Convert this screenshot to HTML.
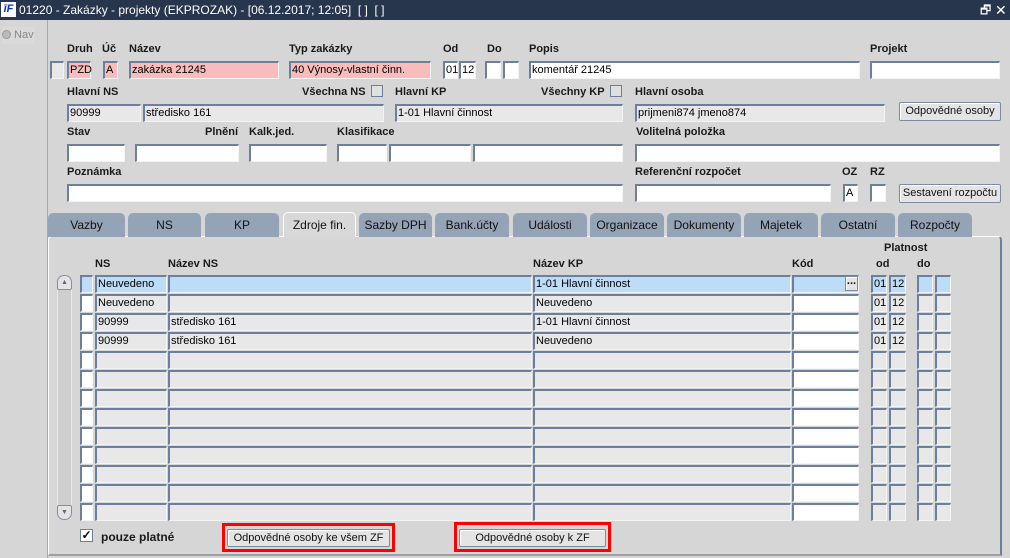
<!DOCTYPE html>
<html><head><meta charset="utf-8">
<style>
*{box-sizing:border-box;margin:0;padding:0}
body{width:1010px;height:558px;overflow:hidden;background:#d6d6d6;font-family:"Liberation Sans",Arial,sans-serif;font-size:11px;color:#000;position:relative}
.a{position:absolute}
#title{left:0;top:0;width:1010px;height:20px;background:#27354d;color:#fff;font-size:12px;line-height:20px}
.lb{position:absolute;font-weight:bold;font-size:11px;color:#1a1a1a;white-space:nowrap}
.f{position:absolute;height:18px;background:#fff;border-top:2px solid #6c7f9c;border-left:2px solid #6c7f9c;border-right:1px solid #f4f4f4;border-bottom:1px solid #f4f4f4;font-size:11px;line-height:14px;padding-left:1px;white-space:nowrap;overflow:visible}
.p{background:#f9bcbc}
.g{background:#e8e8e8}
.hl{background:#bddcf8}
.btn{position:absolute;background:#e4e4e4;border:1px solid #7d8aa0;border-radius:2px;box-shadow:inset 1px 1px 0 #fff;font-size:11px;text-align:center;line-height:16px;color:#111}
.cb{position:absolute;width:12px;height:12px;background:#e0e0e0;border:1px solid #6f7f96}
.tab{position:absolute;top:213px;height:24px;background:#95a3b7;border-radius:5px 5px 0 0;font-size:12px;text-align:center;line-height:24px;color:#111}
.red{position:absolute;border:3px solid #f00}
</style></head><body>
<div id="title" class="a"><span class="a" style="left:1px;top:2px;width:15px;height:15px;background:#fff;color:#1030c0;font-weight:bold;font-style:italic;font-size:11px;line-height:15px;text-align:center">īF</span><span class="a" style="left:19px">01220 - Zakázky - projekty (EKPROZAK) - [06.12.2017; 12:05]&nbsp; [ ]&nbsp; [ ]</span><span class="a" style="left:980px;font-size:12px">🗗</span><span class="a" style="left:995px;font-size:14px">✕</span></div>
<div class="a" style="left:0;top:20px;width:48px;height:538px;background:#d6d6d6;border-right:1px solid #a8a8a8"></div>
<div class="a" style="left:2px;top:27px;width:32px;height:17px;background:#dadada;color:#888;font-size:11px;line-height:17px"><span style="display:inline-block;width:9px;height:9px;border-radius:50%;background:#bbb;border:1px solid #999;vertical-align:-1px"></span> Nav</div>

<div class="lb" style="left:67px;top:43px">Druh</div><div class="lb" style="left:102px;top:43px">Úč</div><div class="lb" style="left:129px;top:43px">Název</div><div class="lb" style="left:289px;top:43px">Typ zakázky</div><div class="lb" style="left:443px;top:43px">Od</div><div class="lb" style="left:487px;top:43px">Do</div><div class="lb" style="left:529px;top:43px">Popis</div><div class="lb" style="left:870px;top:43px">Projekt</div>
<div class="f g" style="left:50px;top:61px;width:14px"></div>
<div class="f p" style="left:67px;top:61px;width:24px">PZD</div>
<div class="f p" style="left:103px;top:61px;width:15px">A</div>
<div class="f p" style="left:129px;top:61px;width:150px">zakázka 21245</div>
<div class="f p" style="left:289px;top:61px;width:142px">40 Výnosy-vlastní činn.</div>
<div class="f" style="left:443px;top:61px;width:15px">01</div>
<div class="f" style="left:459px;top:61px;width:17px">12</div>
<div class="f" style="left:485px;top:61px;width:16px"></div>
<div class="f" style="left:503px;top:61px;width:16px"></div>
<div class="f" style="left:529px;top:61px;width:331px">komentář 21245</div>
<div class="f" style="left:870px;top:61px;width:130px"></div>

<div class="lb" style="left:67px;top:86px">Hlavní NS</div><div class="lb" style="left:302px;top:86px">Všechna NS</div><div class="cb" style="left:371px;top:85px"></div><div class="lb" style="left:395px;top:86px">Hlavní KP</div><div class="lb" style="left:541px;top:86px">Všechny KP</div><div class="cb" style="left:610px;top:85px"></div><div class="lb" style="left:635px;top:86px">Hlavní osoba</div>
<div class="f g" style="left:67px;top:104px;width:74px">90999</div>
<div class="f g" style="left:143px;top:104px;width:241px">středisko 161</div>
<div class="f g" style="left:395px;top:104px;width:228px">1-01 Hlavní činnost</div>
<div class="f g" style="left:635px;top:104px;width:250px">prijmeni874 jmeno874</div>
<div class="btn" style="left:899px;top:102px;width:102px;height:19px">Odpovědné osoby</div>

<div class="lb" style="left:67px;top:126px">Stav</div><div class="lb" style="left:205px;top:126px">Plnění</div><div class="lb" style="left:249px;top:126px">Kalk.jed.</div><div class="lb" style="left:337px;top:126px">Klasifikace</div><div class="lb" style="left:636px;top:126px">Volitelná položka</div>
<div class="f" style="left:67px;top:144px;width:58px"></div>
<div class="f" style="left:135px;top:144px;width:104px"></div>
<div class="f" style="left:249px;top:144px;width:78px"></div>
<div class="f" style="left:337px;top:144px;width:50px"></div>
<div class="f" style="left:389px;top:144px;width:82px"></div>
<div class="f" style="left:473px;top:144px;width:150px"></div>
<div class="f" style="left:635px;top:144px;width:365px"></div>

<div class="lb" style="left:67px;top:166px">Poznámka</div><div class="lb" style="left:635px;top:166px">Referenční rozpočet</div><div class="lb" style="left:842px;top:166px">OZ</div><div class="lb" style="left:870px;top:166px">RZ</div>
<div class="f" style="left:67px;top:184px;width:556px"></div>
<div class="f" style="left:635px;top:184px;width:196px"></div>
<div class="f" style="left:843px;top:184px;width:15px">A</div>
<div class="f" style="left:870px;top:184px;width:16px"></div>
<div class="btn" style="left:899px;top:184px;width:102px;height:19px">Sestavení rozpočtu</div>

<div class="a" style="left:48px;top:236px;width:954px;height:320px;border:1px solid #fff;border-right:2px solid #6c7f9c;border-bottom:2px solid #a0a0a0;border-radius:4px 4px 0 0"></div>
<div class="tab" style="left:48px;width:77px">Vazby</div>
<div class="tab" style="left:128px;width:73px">NS</div>
<div class="tab" style="left:205px;width:74px">KP</div>
<div class="tab" style="left:283px;width:73px;top:212px;height:25px;background:#d8d8d8;border:1px solid #fff;border-bottom:none">Zdroje fin.</div>
<div class="tab" style="left:359px;width:73px">Sazby DPH</div>
<div class="tab" style="left:435px;width:74px">Bank.účty</div>
<div class="tab" style="left:513px;width:74px">Události</div>
<div class="tab" style="left:590px;width:74px">Organizace</div>
<div class="tab" style="left:667px;width:74px">Dokumenty</div>
<div class="tab" style="left:744px;width:74px">Majetek</div>
<div class="tab" style="left:821px;width:74px">Ostatní</div>
<div class="tab" style="left:898px;width:74px">Rozpočty</div>

<div class="lb" style="left:884px;top:242px">Platnost</div>
<div class="lb" style="left:95px;top:258px">NS</div><div class="lb" style="left:168px;top:258px">Název NS</div><div class="lb" style="left:533px;top:258px">Název KP</div><div class="lb" style="left:792px;top:258px">Kód</div><div class="lb" style="left:876px;top:258px">od</div><div class="lb" style="left:917px;top:258px">do</div>

<div class="a" style="left:57px;top:275px;width:15px;height:245px;background:#cfcfcf;border:1px solid #e8e8e8;border-radius:7px"></div>
<div class="a" style="left:57px;top:275px;width:15px;height:15px;border:1px solid #8090a8;border-radius:7px 7px 2px 2px;background:#e4e4e4;font-size:7px;text-align:center;line-height:13px;color:#667">▲</div>
<div class="a" style="left:57px;top:505px;width:15px;height:15px;border:1px solid #8090a8;border-radius:2px 2px 7px 7px;background:#e4e4e4;font-size:7px;text-align:center;line-height:13px;color:#667">▼</div>
<div id="grid"></div>

<div class="a" style="left:80px;top:529px;width:13px;height:13px;background:#fff;border:1px solid #6f7f96;font-size:12px;line-height:11px;text-align:center;font-weight:bold">✓</div>
<div class="lb" style="left:101px;top:530px;font-size:12px">pouze platné</div>
<div class="red" style="left:222px;top:523px;width:173px;height:29px"></div>
<div class="btn" style="left:227px;top:529px;width:163px;height:18px">Odpovědné osoby ke všem ZF</div>
<div class="red" style="left:454px;top:522px;width:157px;height:30px"></div>
<div class="btn" style="left:459px;top:529px;width:147px;height:18px">Odpovědné osoby k ZF</div>

<script>
var cols=[[80,13],[95,72],[168,364],[533,258],[792,67],[871,16],[889,17],[917,16],[935,16]];
var data=[["","Neuvedeno","","1-01 Hlavní činnost","","01","12","",""],["","Neuvedeno","","Neuvedeno","","01","12","",""],["","90999","středisko 161","1-01 Hlavní činnost","","01","12","",""],["","90999","středisko 161","Neuvedeno","","01","12","",""]];
var h="";
for(var r=0;r<13;r++){var y=275+r*19;for(var c=0;c<cols.length;c++){var cls="f g";if(c==0||c==4)cls="f";if(r==0)cls="f hl";if(r>=4&&c==0)cls="f";var t=(data[r]||[])[c]||"";h+='<div class="'+cls+'" style="left:'+cols[c][0]+'px;top:'+y+'px;width:'+cols[c][1]+'px;height:18px">'+t+'</div>';}}
h+='<div class="btn" style="left:845px;top:276px;width:13px;height:15px;line-height:9px;font-weight:bold;border-radius:0">...</div>';
document.getElementById("grid").innerHTML=h;
</script>
</body></html>
